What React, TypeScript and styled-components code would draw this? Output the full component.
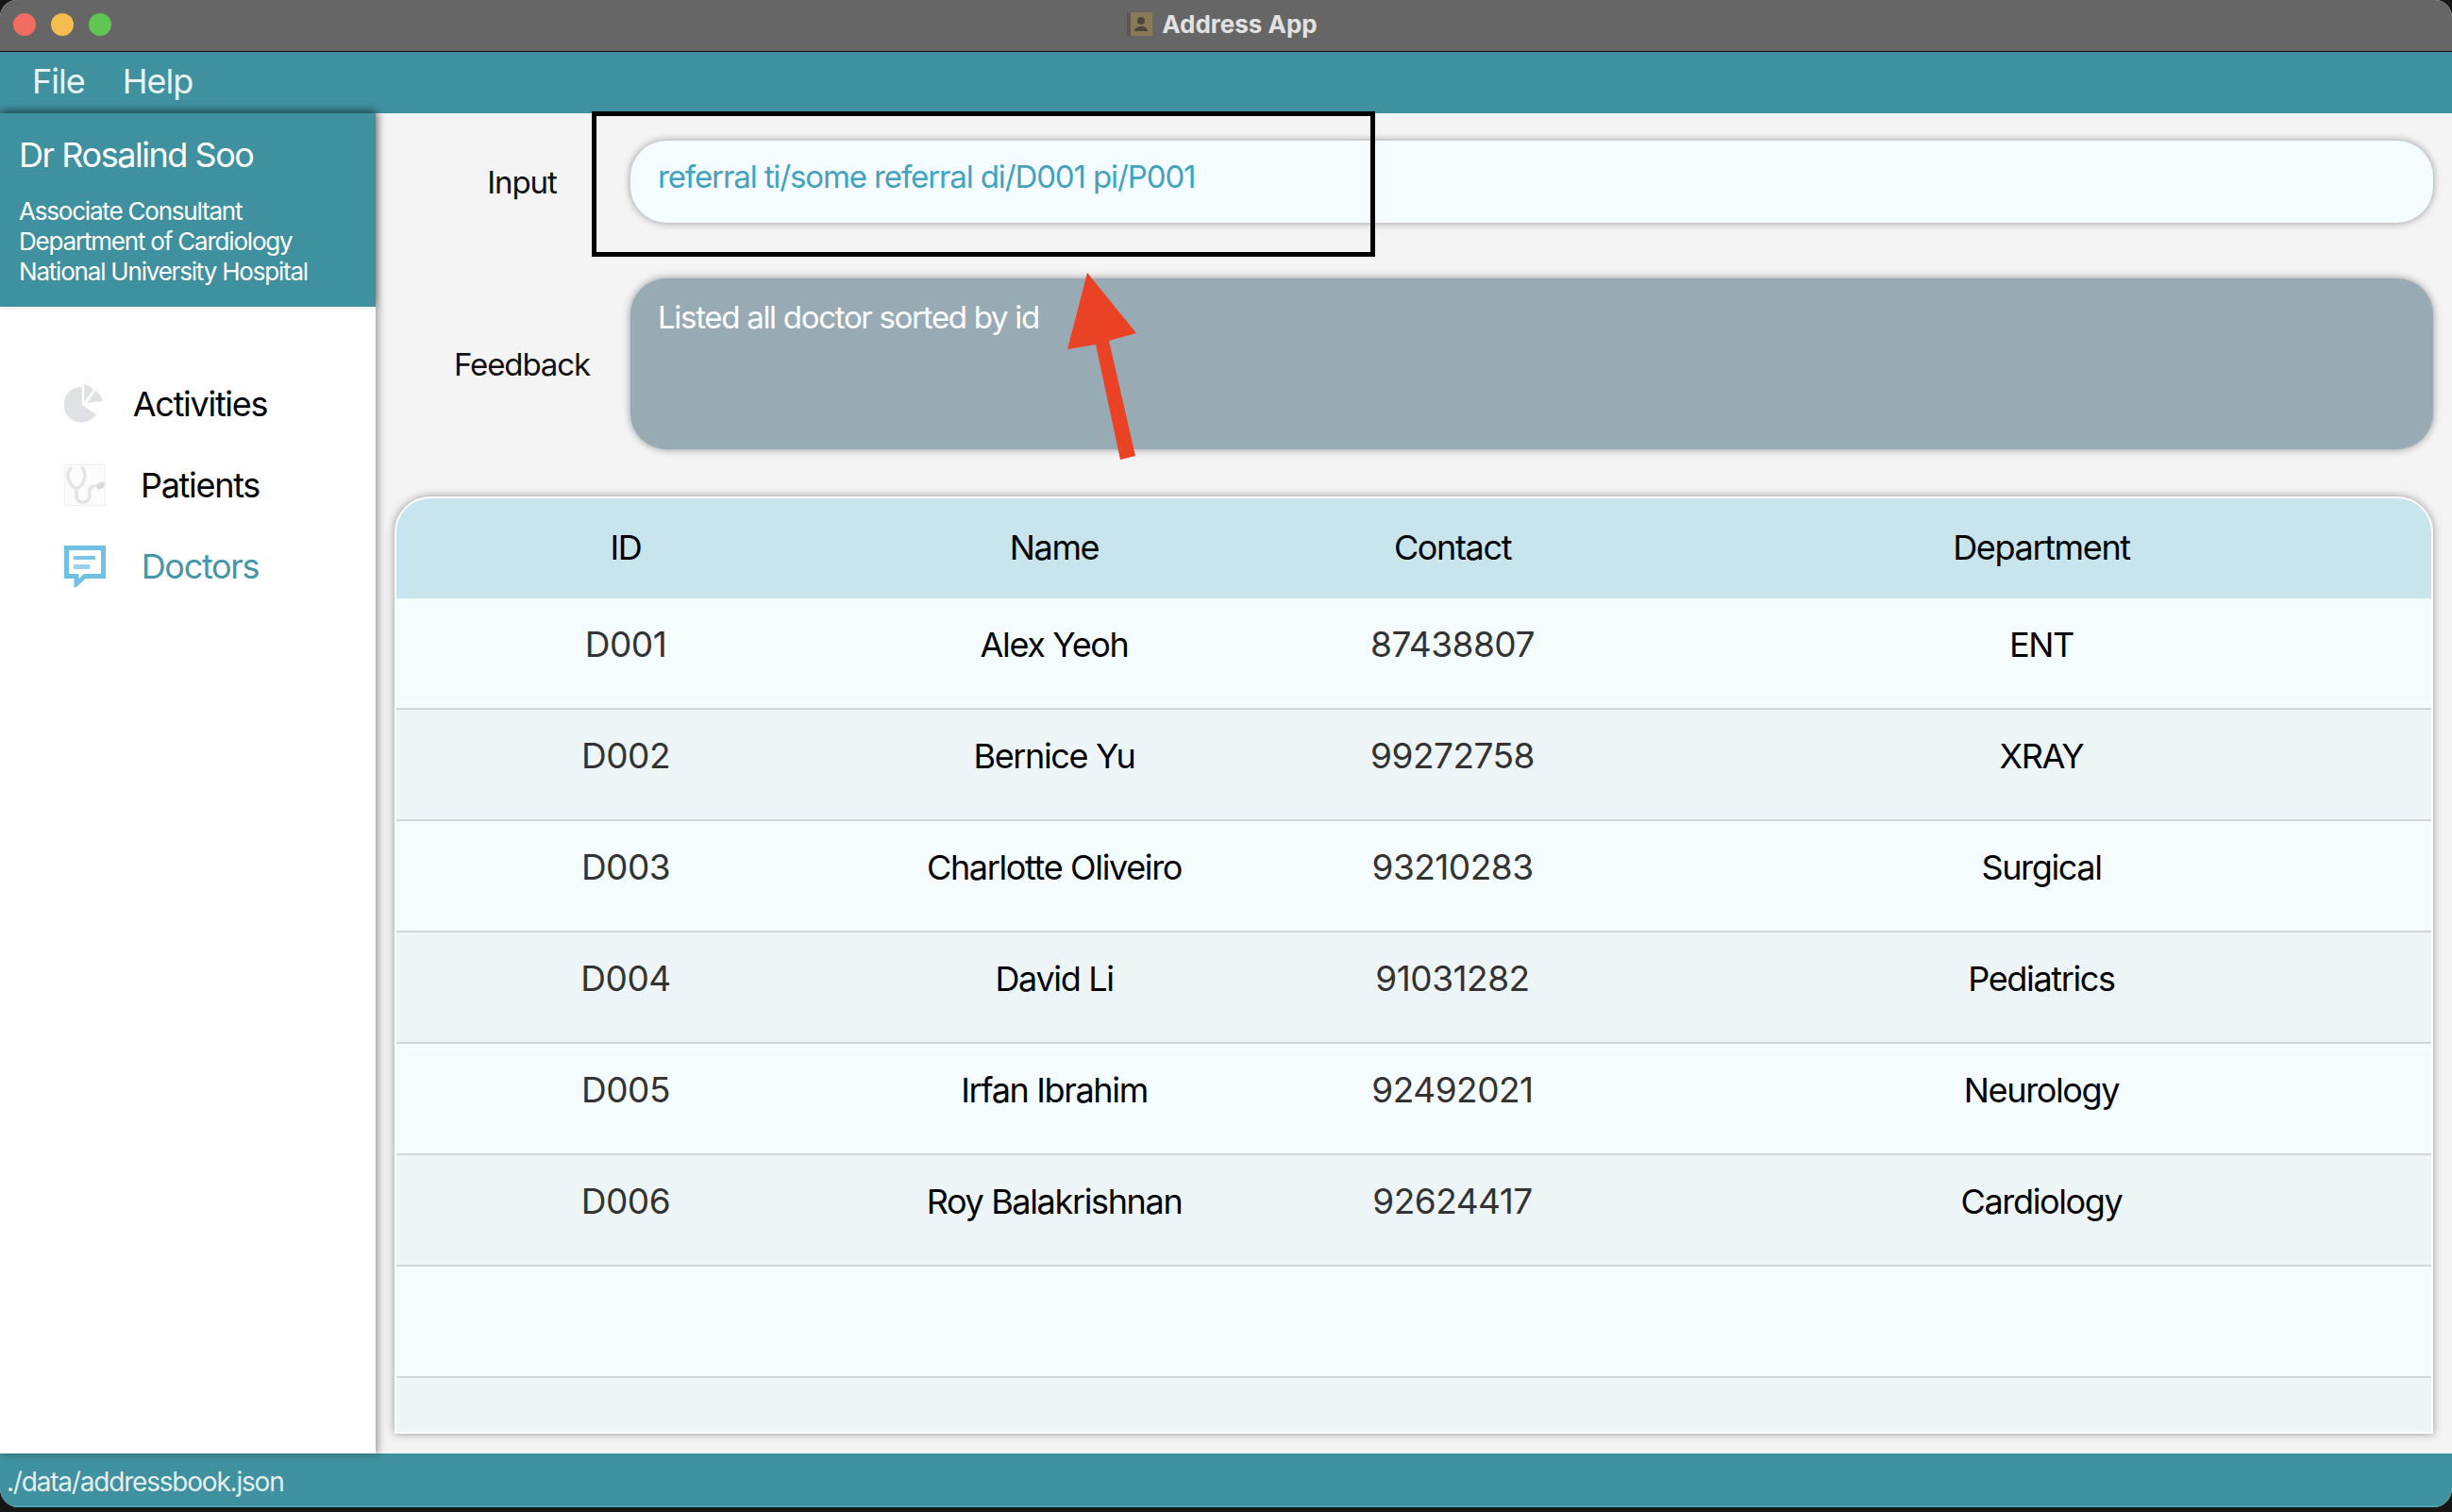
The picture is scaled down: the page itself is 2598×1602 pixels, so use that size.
import React from "react"
import styled, { createGlobalStyle } from "styled-components"

const teal = "#40919f"
const doctors = [
    { id: "D001", name: "Alex Yeoh", contact: "87438807", department: "ENT" },
    { id: "D002", name: "Bernice Yu", contact: "99272758", department: "XRAY" },
    { id: "D003", name: "Charlotte Oliveiro", contact: "93210283", department: "Surgical" },
    { id: "D004", name: "David Li", contact: "91031282", department: "Pediatrics" },
    { id: "D005", name: "Irfan Ibrahim", contact: "92492021", department: "Neurology" },
    { id: "D006", name: "Roy Balakrishnan", contact: "92624417", department: "Cardiology" },
]

const GlobalStyle = createGlobalStyle`
    html, body {
        margin: 0;
        padding: 0;
        background: #161616;
    }
    body {
        font-family: Inter, "Liberation Sans", sans-serif;
    }
`

export default function App() {
    return (
        <Window>
            <GlobalStyle />
            <TitleBar>
                <Lights>
                    <Light color="#f26d60" />
                    <Light color="#f5bd4f" />
                    <Light color="#61c554" />
                </Lights>
                <BookIcon viewBox="0 0 27 25">
                    <rect x="0" y="0" width="5" height="25" fill="#5a5650" />
                    <rect x="4" y="0" width="23" height="25" rx="1" fill="#8a7a5c" />
                    <circle cx="15" cy="9" r="4" fill="#4d463a" />
                    <path d="M8 20c0-4 4-5 7-5s7 1 7 5z" fill="#4d463a" />
                </BookIcon>
                <Title>Address App</Title>
            </TitleBar>
            <MenuBar>
                <MenuItem>File</MenuItem>
                <MenuItem>Help</MenuItem>
            </MenuBar>
            <Body>
                <Sidebar>
                    <Profile>
                        <ProfileName>Dr Rosalind Soo</ProfileName>
                        <ProfileLines>
                            <div>Associate Consultant</div>
                            <div>Department of Cardiology</div>
                            <div>National University Hospital</div>
                        </ProfileLines>
                    </Profile>
                    <Nav>
                        <NavItem>
                            <NavIcon viewBox="0 0 44 44">
                                <path d="M19 4V23L34 33A18.8 18.8 0 1 1 19 4z" fill="#dfe1e4" />
                                <path d="M21 1V20L31 7A18 18 0 0 0 21 1z" fill="#dfe1e4" />
                                <path d="M24 21L33 8A18 18 0 0 1 41 19z" fill="#dfe1e4" />
                            </NavIcon>
                            <NavLabel>Activities</NavLabel>
                        </NavItem>
                        <NavItem>
                            <NavIcon viewBox="0 0 44 44">
                                <rect x="0.5" y="0.5" width="43" height="43" fill="#fcfcfc" stroke="#f1f1f2" />
                                <path d="M8 3C3 7 3 14 6 19c2 4 4 6 7 6s5-2 7-6c3-5 3-12-2-16" fill="none" stroke="#e3e4e7" strokeWidth="3.5" />
                                <path d="M13 25v9c0 8 13 8 14 0v-6c0-3 2-5 6-5" fill="none" stroke="#e3e4e7" strokeWidth="3.5" />
                                <path d="M33 22l8-4 2 2-1 5-6 2z" fill="#d8dade" />
                            </NavIcon>
                            <NavLabel>Patients</NavLabel>
                        </NavItem>
                        <NavItem>
                            <NavIcon viewBox="0 0 44 44">
                                <path d="M2.5 2.5h39v30H22l-9 8v-8H2.5z" fill="#fff" stroke="#6fc1e3" strokeWidth="5" />
                                <rect x="10" y="11" width="23" height="4" fill="#7cc6e5" />
                                <rect x="10" y="20" width="17" height="5" fill="#9ad2ea" />
                            </NavIcon>
                            <NavLabel active>Doctors</NavLabel>
                        </NavItem>
                    </Nav>
                </Sidebar>
                <Main>
                    <FormRow>
                        <FieldLabel>Input</FieldLabel>
                        <InputPill>referral ti/some referral di/D001 pi/P001</InputPill>
                    </FormRow>
                    <FeedbackRow>
                        <FieldLabel>Feedback</FieldLabel>
                        <FeedbackBox>Listed all doctor sorted by id</FeedbackBox>
                    </FeedbackRow>
                    <Table>
                        <HeaderRow>
                            <HeaderCell>ID</HeaderCell>
                            <HeaderCell>Name</HeaderCell>
                            <HeaderCell>Contact</HeaderCell>
                            <HeaderCell>Department</HeaderCell>
                        </HeaderRow>
                        {doctors.map((d, i) => (
                            <Row key={d.id} even={i % 2 === 1}>
                                <NumberCell>{d.id}</NumberCell>
                                <Cell>{d.name}</Cell>
                                <NumberCell>{d.contact}</NumberCell>
                                <Cell>{d.department}</Cell>
                            </Row>
                        ))}
                        <Row />
                        <LastRow />
                    </Table>
                </Main>
            </Body>
            <StatusBar>./data/addressbook.json</StatusBar>
            <Highlight />
            <Arrow viewBox="0 0 80 200">
                <path d="M24 0L76 64 47 72 75 194 59 198 33 76 3 81z" fill="#ea4225" />
            </Arrow>
        </Window>
    )
}

const Window = styled.div`
    position: relative;
    width: 2598px;
    height: 1597px;
    display: flex;
    flex-direction: column;
    overflow: hidden;
    background: #f4f4f4;
    border-radius: 18px 18px 20px 20px;
`
const TitleBar = styled.div`
    position: relative;
    height: 55px;
    flex: none;
    display: flex;
    align-items: center;
    justify-content: center;
    gap: 10px;
    padding-bottom: 3px;
    box-sizing: border-box;
    background: #666666;
    border-bottom: 1px solid #111;
`
const Lights = styled.div`
    position: absolute;
    left: 14px;
    top: 14px;
    display: flex;
    gap: 16px;
`
const Light = styled.span<{ color: string }>`
    width: 24px;
    height: 24px;
    border-radius: 50%;
    background: ${({ color }) => color};
`
const BookIcon = styled.svg`
    width: 27px;
    height: 25px;
    margin-left: -8px;
`
const Title = styled.span`
    font-size: 26px;
    font-weight: 700;
    color: #e2e2e2;
`
const MenuBar = styled.div`
    height: 65px;
    flex: none;
    display: flex;
    align-items: center;
    gap: 40px;
    padding: 0 0 3px 34px;
    box-sizing: border-box;
    background: ${teal};
`
const MenuItem = styled.span`
    font-size: 36px;
    letter-spacing: -1px;
    color: #e9f3f5;
`
const Body = styled.div`
    flex: 1;
    display: flex;
    min-height: 0;
`
const Sidebar = styled.div`
    width: 398px;
    flex: none;
    display: flex;
    flex-direction: column;
    background: #fff;
    box-shadow: 3px 0 8px rgba(0, 0, 0, 0.35);
    position: relative;
`
const Profile = styled.div`
    height: 205px;
    box-sizing: border-box;
    padding: 21px 20px 0;
    background: ${teal};
    color: #fff;
    box-shadow: 0 -3px 8px rgba(0, 0, 0, 0.35);
`
const ProfileName = styled.div`
    font-size: 36px;
    line-height: 46px;
    letter-spacing: -1.45px;
`
const ProfileLines = styled.div`
    margin-top: 21px;
    font-size: 26px;
    line-height: 32px;
    letter-spacing: -1.2px;
`
const Nav = styled.div`
    display: flex;
    flex-direction: column;
    gap: 42px;
    padding: 81px 0 0 68px;
`
const NavItem = styled.div`
    display: flex;
    align-items: center;
    height: 44px;
`
const NavIcon = styled.svg`
    width: 44px;
    height: 44px;
    flex: none;
    filter: blur(0.7px);
`
const NavLabel = styled.span<{ active?: boolean }>`
    width: 200px;
    text-align: center;
    font-size: 36px;
    letter-spacing: -1.3px;
    color: ${({ active }) => (active ? "#4496a8" : "#000")};
`
const Main = styled.div`
    flex: 1;
    min-width: 0;
    display: flex;
    flex-direction: column;
    padding: 29px 20px 21px 20px;
    background: #f4f4f4;
`
const FormRow = styled.div`
    display: flex;
    align-items: center;
    height: 87px;
`
const FeedbackRow = styled(FormRow)`
    height: 181px;
    margin-top: 59px;
`
const FieldLabel = styled.div`
    width: 230px;
    margin-left: 20px;
    flex: none;
    text-align: center;
    font-size: 33px;
    letter-spacing: -1.1px;
    color: #111;
`
const InputPill = styled.div`
    flex: 1;
    height: 100%;
    box-sizing: border-box;
    padding: 16px 29px;
    border-radius: 38px;
    background: #f4fcff;
    box-shadow: 0 0 8px rgba(0, 0, 0, 0.4);
    font-size: 33px;
    line-height: 44px;
    letter-spacing: -1.12px;
    color: #44a2bf;
`
const FeedbackBox = styled(InputPill)`
    background: #98abb5;
    color: #fff;
    padding-top: 19px;
    letter-spacing: -1.3px;
`
const Table = styled.div`
    flex: 1;
    margin: 50px 0 0 0;
    display: flex;
    flex-direction: column;
    overflow: hidden;
    box-sizing: border-box;
    border: 2px solid #fff;
    border-radius: 38px 38px 0 0;
    background: #edf5f7;
    box-shadow: 0 0 10px rgba(0, 0, 0, 0.4);
`
const columns = `
    display: grid;
    grid-template-columns: 486px 422px 422px 1fr;
    align-items: center;
    text-align: center;
`
const HeaderRow = styled.div`
    ${columns}
    height: 106px;
    flex: none;
    background: #c8e4ec;
`
const HeaderCell = styled.div`
    font-size: 36px;
    letter-spacing: -1.35px;
    color: #000;
    padding-bottom: 2px;
`
const Row = styled.div<{ even?: boolean }>`
    ${columns}
    height: 118px;
    flex: none;
    box-sizing: border-box;
    border-bottom: 2px solid #d2d6d7;
    background: ${({ even }) => (even ? "#edf5f7" : "#f4fcfe")};
`
const LastRow = styled.div`
    flex: 1;
    background: #edf5f7;
`
const Cell = styled.div`
    font-size: 36px;
    letter-spacing: -1.35px;
    padding-bottom: 18px;
    color: #000;
`
const NumberCell = styled(Cell)`
    font-size: 37px;
    letter-spacing: -0.5px;
    padding-bottom: 20px;
    color: #333;
`
const StatusBar = styled.div`
    height: 57px;
    flex: none;
    display: flex;
    align-items: center;
    padding: 4px 0 0 7px;
    background: ${teal};
    border-bottom: 2px solid #4fa6b2;
    box-sizing: border-box;
    font-size: 28px;
    letter-spacing: -1.2px;
    color: #e2eff2;
`
const Highlight = styled.div`
    position: absolute;
    left: 627px;
    top: 118px;
    width: 830px;
    height: 154px;
    box-sizing: border-box;
    border: 5px solid #000;
`
const Arrow = styled.svg`
    position: absolute;
    left: 1128px;
    top: 289px;
    width: 80px;
    height: 200px;
`
